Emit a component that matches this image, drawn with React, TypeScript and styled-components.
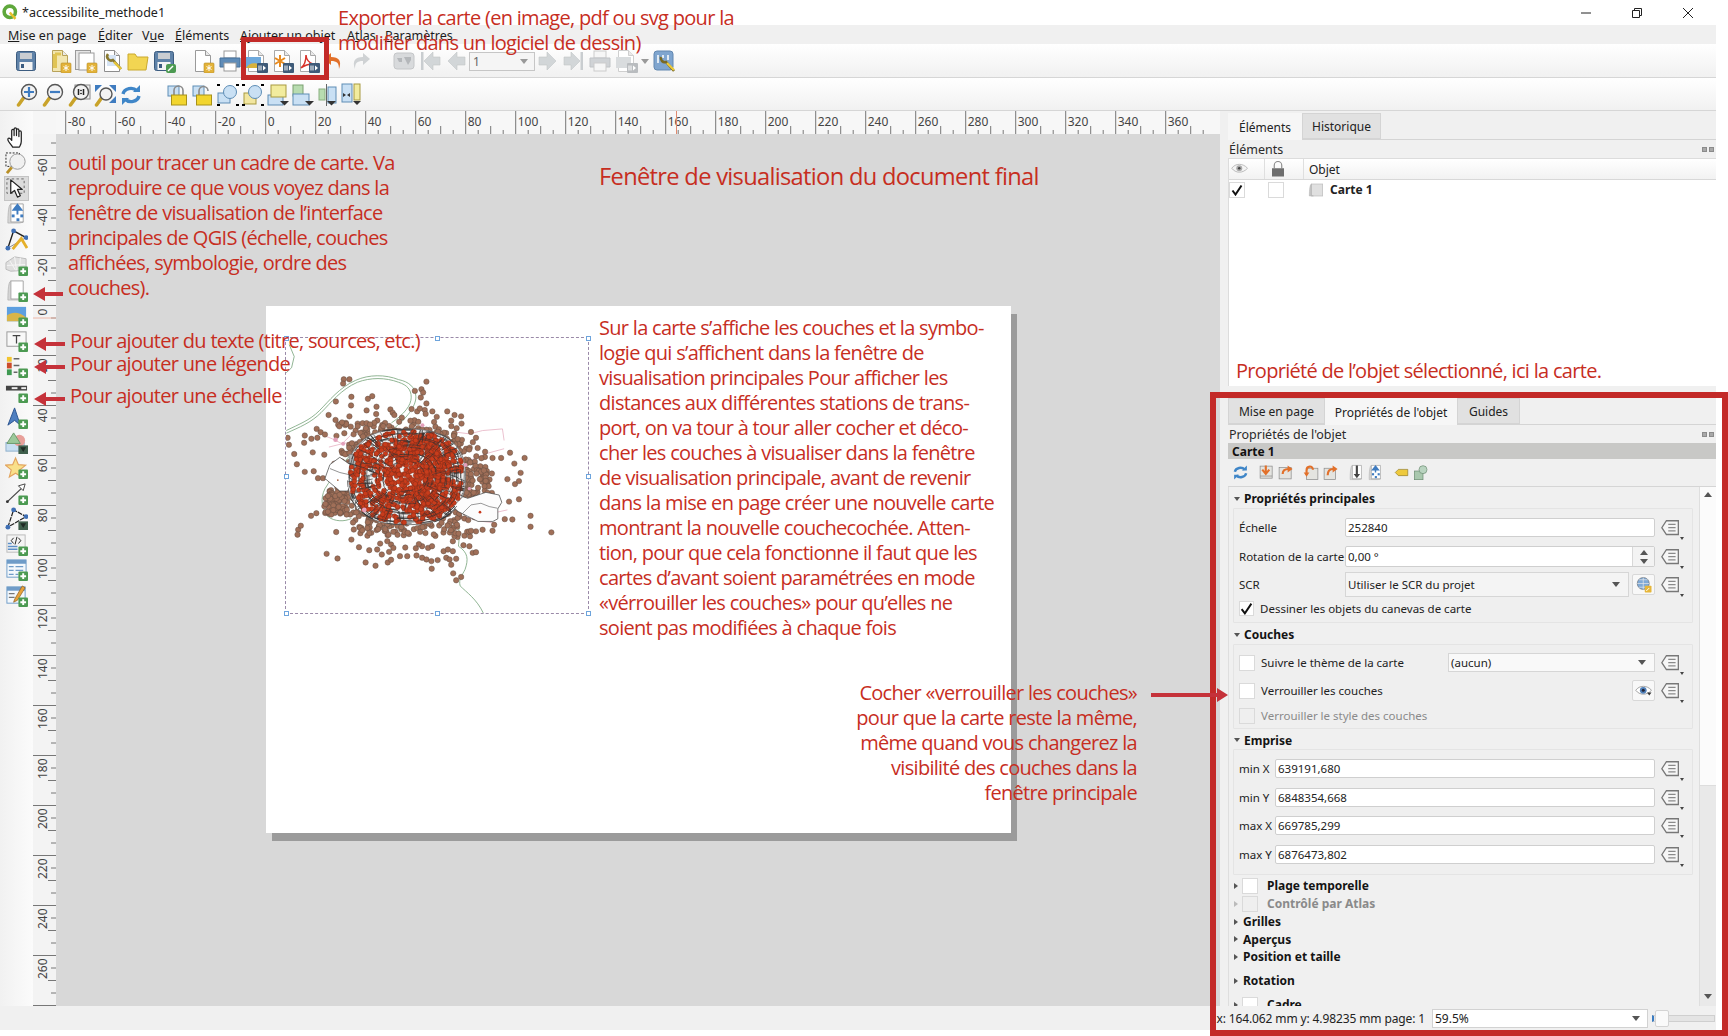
import React, { useMemo } from "react";
import styled, { createGlobalStyle } from "styled-components";

const GlobalStyle = createGlobalStyle`
  html, body { margin: 0; padding: 0; background: #fff; overflow: hidden; }
  body { width: 1728px; height: 1036px; font-family: "Noto Sans", "Open Sans", sans-serif; color: #1a1a1a; }
  * { box-sizing: border-box; }
`;

const UI = `"Noto Sans", "Open Sans", sans-serif`;
const RED = "#c72e1f";
const FRAME = "#c32a28";

const Page = styled.div`position: relative; width: 1728px; height: 1036px; overflow: hidden; background: #fff;`;
const Win = styled.div`width: 1716px; height: 1005px; display: flex; flex-direction: column;`;

const TitleBar = styled.div`height: 25px; width: 1728px; background: #fff; display: flex; align-items: center; padding-left: 2px; font: 12.5px ${UI}; color: #222;`;
const TitleText = styled.span`margin-left: 3px;`;
const WinButtons = styled.div`margin-left: auto; display: flex; gap: 27px; padding-right: 28px; align-items: center;`;

const MenuBar = styled.div`height: 19px; flex: 0 0 19px; background: #f0f0f0; display: flex; align-items: center; padding-top: 2px; font: 12.5px ${UI}; color: #1c1c1c;`;
const MenuItem = styled.span<{ $w: number }>`flex: 0 0 auto; width: ${(p) => p.$w}px; u { text-decoration-thickness: 1px; }`;
const MenuPad = styled.span`width: 8px;`;

const Toolbar = styled.div<{ $h: number; $pad: number }>`
  height: ${(p) => p.$h}px; flex: 0 0 ${(p) => p.$h}px; padding: 1px 0 0 ${(p) => p.$pad}px; display: flex; align-items: center;
  background: linear-gradient(#ffffff, #f1f1f1); border-bottom: 1px solid #d6d6d6;
`;
const ToolBtn = styled.span<{ $w?: number }>`flex: 0 0 auto; width: ${(p) => p.$w ?? 26}px; display: flex; justify-content: center; align-items: center;`;
const ToolGap = styled.span<{ $w: number }>`flex: 0 0 auto; width: ${(p) => p.$w}px;`;
const PageCombo = styled.span`
  flex: 0 0 auto; width: 66px; height: 19px; border: 1px solid #c6c6c6; background: #f5f5f5; font: 12px ${UI}; color: #666;
  display: flex; align-items: center; justify-content: space-between; padding: 0 6px 0 3px;
`;
const Caret = styled.span<{ $c?: string }>`width: 0; height: 0; border-left: 4.5px solid transparent; border-right: 4.5px solid transparent; border-top: 5px solid ${(p) => p.$c ?? "#555"};`;

const Main = styled.div`flex: 1; display: flex; min-height: 0;`;
const LeftBar = styled.div`width: 33px; flex: 0 0 33px; background: linear-gradient(90deg, #f1f1f1, #fbfbfb); padding-top: 14px; display: flex; flex-direction: column; align-items: center;`;
const LeftBtn = styled.span<{ $on?: boolean }>`
  flex: 0 0 25.42px; width: 25px; display: flex; align-items: center; justify-content: center;
  ${(p) => p.$on && "background:#dcdcdc;border:1px solid #c4c4c4;"}
`;

const Center = styled.div`width: 1187px; display: grid; grid-template-columns: 23px 1fr; grid-template-rows: 23px 1fr;`;
const Corner = styled.div`background: #f6f6f6;`;
const RulerH = styled.svg`display: block; width: 1164px; height: 23px; background: #f7f7f7;`;
const RulerV = styled.svg`display: block; width: 23px; height: 872px; background: #f3f3f3;`;
const Canvas = styled.div`position: relative; background: #d8d8d8; overflow: hidden;`;
const Paper = styled.div`position: absolute; left: 210px; top: 172px; width: 745px; height: 527px; background: #fff; box-shadow: 6px 8px 0 #9b9b9b;`;
const MapFrame = styled.div`position: absolute; left: 19px; top: 31px; width: 304px; height: 277px; border: 1px dashed #9a8aa8;`;
const Handle = styled.i<{ $x: number; $y: number }>`
  position: absolute; left: ${(p) => p.$x}%; top: ${(p) => p.$y}%; width: 5px; height: 5px; margin: -2px 0 0 -2px;
  background: #fff; border: 1px solid #6ea4dc;
`;
const MapSvg = styled.svg`position: absolute; inset: 0; width: 302px; height: 275px;`;

const Right = styled.div`width: 496px; min-height: 0; overflow: hidden; padding-left: 8px; background: #f0f0f0; display: flex; flex-direction: column; font: 11.5px ${UI}; color: #222;`;
const Tabs = styled.div<{ $mt?: number }>`height: 27px; flex: 0 0 27px; margin-top: ${(p) => p.$mt ?? 0}px; display: flex; border-bottom: 1px solid #d4d4d4;`;
const Tab = styled.span<{ $w: number; $on?: boolean }>`
  width: ${(p) => p.$w}px; height: ${(p) => (p.$on ? 27 : 26)}px; display: flex; align-items: center; justify-content: center; font: 12px ${UI}; padding-top: 1px;
  background: ${(p) => (p.$on ? "#f6f6f6" : "#e1e1e1")}; border: 1px solid #d4d4d4; border-bottom: ${(p) => (p.$on ? "0" : "1px solid #d4d4d4")};
  ${(p) => p.$on && "border-top:0;border-left:0;border-right:0;"}
`;
const DockHead = styled.div`height: 18px; flex: 0 0 18px; display: flex; align-items: center; justify-content: space-between; font: 12.5px ${UI}; padding: 1px 2px 0 1px; color: #2a2a2a;`;
const DockBtns = styled.span`display: flex; gap: 2px;`;
const DockBtn = styled.i`width: 5px; height: 5px; background: #a8a8a8; border: 1px solid #8b8b8b;`;

const Tree = styled.div`height: 228px; flex: 0 0 228px; background: #fff; border-left: 1px solid #dcdcdc; border-top: 1px solid #dcdcdc;`;
const TreeHead = styled.div`height: 21px; display: flex; background: linear-gradient(#fff, #f2f2f2); border-bottom: 1px solid #d8d8d8;`;
const TreeIconCell = styled.div<{ $w: number; $pad: number }>`
  width: ${(p) => p.$w}px; display: flex; align-items: center; padding-left: ${(p) => p.$pad}px; border-right: 1px solid #dfdfdf;
`;
const TreeTextCell = styled.div`flex: 1; display: flex; align-items: center; padding-left: 5px; font: 12px ${UI};`;
const TreeRow = styled.div`height: 19px; display: flex; align-items: center;`;
const TreeName = styled.b`margin-left: 6px; font: bold 12px ${UI};`;
const CheckBox = styled.span<{ $dim?: boolean; $s?: number }>`
  flex: 0 0 auto; width: ${(p) => p.$s ?? 16}px; height: ${(p) => p.$s ?? 16}px; background: ${(p) => (p.$dim ? "#efefef" : "#fff")}; border: 1px solid #dadada;
  display: inline-flex; align-items: center; justify-content: center;
`;
const TreeCheck = styled.span<{ $w: number; $pad: number }>`flex: 0 0 ${(p) => p.$w}px; padding-left: ${(p) => p.$pad}px; display: flex;`;

const Spacer6 = styled.div`height: 6px; flex: 0 0 6px;`;
const Title1 = styled.div`height: 16px; flex: 0 0 16px; background: #c8c8c6; font: bold 12px ${UI}; padding-left: 4px; display: flex; align-items: center; color: #111;`;
const IconRow = styled.div`height: 28px; flex: 0 0 28px; display: flex; align-items: center; padding-left: 3px; border-bottom: 1px solid #d5d5d5;`;
const SmallBtn = styled.span`flex: 0 0 19.5px; display: flex; justify-content: center;`;
const SmallSep = styled.span<{ $w: number }>`flex: 0 0 ${(p) => p.$w}px;`;

const Scroll = styled.div`flex: 1; min-height: 0; display: flex; overflow: hidden;`;
const Form = styled.div`width: 471px; padding-left: 4px; display: flex; flex-direction: column; border-left: 1px solid #dedede;`;
const Section = styled.div<{ $h: number; $mt?: number; $dim?: boolean }>`
  height: ${(p) => p.$h}px; flex: 0 0 ${(p) => p.$h}px; margin-top: ${(p) => p.$mt ?? 0}px; display: flex; align-items: center;
  font: bold 12px ${UI}; color: ${(p) => (p.$dim ? "#8a8a8a" : "#141414")};
`;
const HeadSection = styled(Section)`padding-top: 2px;`;
const Tri = styled.span<{ $open?: boolean; $dim?: boolean }>`
  flex: 0 0 auto; width: 0; height: 0; margin: 0 4px 0 1px;
  ${(p) => p.$open
    ? `border-left:3px solid transparent;border-right:3px solid transparent;border-top:4px solid #555;`
    : `border-top:3px solid transparent;border-bottom:3px solid transparent;border-left:4px solid ${p.$dim ? "#bbb" : "#555"};margin-right:5px;`}
`;
const SectionCheck = styled.span`margin-right: 9px; margin-left: -1px; display: flex;`;
const Group = styled.div<{ $pt: number; $pb: number; $gap: number }>`
  flex: 0 0 auto; border: 1px solid #e4e4e4; background: #efefef; margin-right: 6px; padding: ${(p) => p.$pt}px 5px ${(p) => p.$pb}px 5px;
  display: flex; flex-direction: column; gap: ${(p) => p.$gap}px; border-radius: 1px;
`;
const Row = styled.div<{ $h?: number; $mt?: number }>`height: ${(p) => p.$h ?? 19}px; margin-top: ${(p) => p.$mt ?? 0}px; display: flex; align-items: center;`;
const Label = styled.span<{ $w: number; $dim?: boolean }>`flex: 0 0 ${(p) => p.$w}px; white-space: nowrap; color: ${(p) => (p.$dim ? "#8a8a8a" : "#222")};`;
const CheckLabel = styled.span<{ $dim?: boolean }>`margin-left: 6px; white-space: nowrap; color: ${(p) => (p.$dim ? "#8a8a8a" : "#222")};`;
const Field = styled.span`flex: 1; height: 100%; background: #fff; border: 1px solid #cfcfcf; border-radius: 2px; padding-left: 2px; display: flex; align-items: center; color: #222;`;
const Combo = styled.span<{ $w?: number }>`
  ${(p) => (p.$w ? `flex:0 0 ${p.$w}px;` : "flex:1;")} height: 100%; background: #f4f4f4; border: 1px solid #d6d6d6; padding: 0 8px 0 2px;
  display: flex; align-items: center; justify-content: space-between;
`;
const WhiteCombo = styled(Combo)`background: #f9f9f9;`;
const SpinBox = styled.span`margin-left: auto; width: 22px; height: 100%; border-left: 1px solid #d8d8d8; background: #f3f3f3; display: flex; flex-direction: column; align-items: center; justify-content: center; gap: 4px;`;
const CaretUp = styled(Caret)`border-top: 0; border-bottom: 5px solid #555;`;
const DD = styled.span`flex: 0 0 27px; margin-left: 5px; height: 19px; display: flex; position: relative;`;
const DDCaret = styled.i`position: absolute; right: 3px; bottom: -3px; width: 0; height: 0; border-left: 2.5px solid transparent; border-right: 2.5px solid transparent; border-top: 3px solid #444;`;
const SquareBtn = styled.span`flex: 0 0 23px; margin-left: 3px; height: 21px; background: #f8f8f8; border: 1px solid #d8d8d8; border-radius: 2px; display: flex; align-items: center; justify-content: center;`;
const PushRight = styled.span`margin-left: auto;`;

const VScroll = styled.div`width: 17px; flex: 0 0 17px; display: flex; flex-direction: column; border-left: 1px solid #dedede;`;
const VThumb = styled.div`height: 299px; flex: 0 0 299px; background: #fbfbfb; border-bottom: 1px solid #ddd; padding-top: 5px; display: flex; justify-content: center;`;
const VTrack = styled.div`flex: 1; background: #e9e9e9; display: flex; justify-content: center; align-items: flex-start; padding-top: 208px;`;

const Status = styled.div`height: 24px; flex: 0 0 24px; background: #f0f0f0; display: flex; align-items: center; justify-content: flex-end; font: 12px ${UI}; color: #222; padding-right: 1px;`;
const StatusText = styled.span`margin-right: 7px; white-space: nowrap; letter-spacing: -0.12px;`;
const ZoomCombo = styled.span`width: 216px; height: 19px; background: #fff; border: 1px solid #d2d2d2; padding: 0 7px 0 2px; display: flex; align-items: center; justify-content: space-between;`;
const Slider = styled.span`position: relative; width: 63px; height: 7px; margin-left: 4px; background: #e4e4e4; border: 1px solid #cfcfcf; border-left: 2px solid #3a7cc2;`;
const SliderKnob = styled.i`position: absolute; left: 1px; top: -6px; width: 14px; height: 17px; background: #fafafa; border: 1px solid #d4d4d4; border-radius: 2px;`;

const Annot = styled.div<{ $x: number; $y: number; $size?: number; $lh?: number; $right?: boolean }>`
  position: absolute; ${(p) => (p.$right ? `right:${1728 - p.$x}px;text-align:right;` : `left:${p.$x}px;`)} top: ${(p) => p.$y}px;
  font-family: "Open Sans", sans-serif; font-size: ${(p) => p.$size ?? 20}px; line-height: ${(p) => p.$lh ?? 25}px; letter-spacing: -0.7px; color: ${RED}; white-space: nowrap;
`;
const AnnotLine = styled.div``;
const RedRect = styled.div`position: absolute; left: 241px; top: 37px; width: 88px; height: 43px; border: 5px solid ${FRAME}; pointer-events: none;`;
const RedPanel = styled.div`position: absolute; left: 1210px; top: 392px; width: 518px; height: 644px; border: 6px solid ${FRAME}; pointer-events: none;`;
const ArrowBox = styled.svg<{ $x: number; $y: number; $w: number }>`position: absolute; left: ${(p) => p.$x}px; top: ${(p) => p.$y}px; width: ${(p) => p.$w}px; height: 14px;`;
const IconSvg = styled.svg`display: block; flex: 0 0 auto;`;

/* ---------- icons ---------- */
const PlusB = () => (<g><rect x="14" y="14" width="10" height="10" rx="1" fill="#4c9a52" /><path d="M19 16v6M16 19h6" stroke="#fff" strokeWidth="2" /></g>);
const DarkB = () => (<g><rect x="14" y="15" width="10" height="9" fill="#3f5f4c" /><path d="M16 17h6l-3 5z" fill="#1f2a24" /></g>);
const StarB = () => (<g><rect x="13" y="14" width="10" height="10" rx="1" fill="#e3b33a" stroke="#b98f25" strokeWidth=".6" /><path d="M18 16v6M15.500 17.500l5 3M20.500 17.500l-5 3" stroke="#fff" strokeWidth="1" /></g>);
const ExpB = ({ c = "#3e5a78" }: { c?: string }) => (<g><rect x="13" y="14" width="11" height="10" rx="1" fill={c} /><path d="M15 16.500v5M17 16.500v5" stroke="#fff" strokeWidth="1" /><path d="M19 16.500l3 2.500-3 2.500" fill="#fff" /></g>);
const Doc = ({ f = "#fff", s = "#9a9a9a" }: { f?: string; s?: string }) => (<g><path d="M4.500 1.500h10l5 5v16h-15z" fill={f} stroke={s} /><path d="M14.500 1.500v5h5" fill="#e9e9e9" stroke={s} /></g>);
const Lens = ({ cx = 14, cy = 9, r = 7.500, fill = "#f2f2f2" }: { cx?: number; cy?: number; r?: number; fill?: string }) => (
  <g><path d="M8.500 15L3.500 22" stroke="#c9a32a" strokeWidth="3.500" strokeLinecap="round" /><circle cx={cx} cy={cy} r={r} fill={fill} stroke="#555" strokeWidth="1.400" /></g>
);
const Floppy = () => (<g><rect x="2.500" y="2.500" width="19" height="19" rx="2" fill="#5f82a8" stroke="#3c5c80" /><rect x="6" y="4" width="12" height="6" fill="#c9cdd2" /><rect x="5.500" y="13" width="13" height="8" fill="#f4f4f4" /><rect x="7" y="15" width="3" height="4" fill="#3c5c80" /></g>);
const Refresh = () => (<g fill="none" stroke="#3f86c8" strokeWidth="3.400"><path d="M4 11a8 7 0 0 1 14-3" /><path d="M20 13a8 7 0 0 1-14 3" /><path d="M14 9l7 0 0-7z" fill="#3f86c8" strokeWidth="0" /><path d="M10 15l-7 0 0 7z" fill="#3f86c8" strokeWidth="0" /></g>);
const Lock = ({ open }: { open?: boolean }) => (<g><rect x="2" y="3" width="11" height="10" fill="#c9e0f4" stroke="#5e8db5" /><path d={open ? "M8 13V8a4.500 4.500 0 0 1 9 0" : "M8 13V7.500a4.500 4.500 0 0 1 9 0V13"} fill="none" stroke="#8a8a8a" strokeWidth="1.600" /><rect x="5.500" y="12" width="15" height="10" fill="#f2d52e" stroke="#a8921a" /></g>);
const GreyArrow = ({ d }: { d: string }) => <path d={d} fill="#d2d6d8" stroke="#c2c6c8" strokeWidth=".6" />;
const Curl = () => (<g><path d="M6 2h13v19H6z" fill="#fff" stroke="#a4a4a4" /><path d="M6 2C3 3 3 18 3 22h12l4-1H6z" fill="#d6d6d6" stroke="#a4a4a4" strokeWidth=".6" /></g>);

const glyphs: Record<string, React.ReactNode> = {
  save: <Floppy />,
  newL: <g><Doc f="#f2e6b0" s="#b8a25a" /><path d="M7 5v14" stroke="#e0c454" strokeWidth="4" /><path d="M7 5h6" stroke="#e0c454" strokeWidth="3" /><StarB /></g>,
  dupL: <g><rect x="1.500" y="1.500" width="15" height="19" fill="#e6e6e6" stroke="#9a9a9a" /><rect x="5" y="4" width="15" height="17" fill="#fff" stroke="#9a9a9a" /><StarB /></g>,
  mgr: <g><Doc s="#8d8d8d" /><rect x="7" y="6" width="9" height="11" fill="#d6e4f4" /><path d="M8 5a4 4 0 0 0 5 6l8 9" stroke="#8a7a30" strokeWidth="2.600" fill="none" /><path d="M14 13l7 7" stroke="#e5c53a" strokeWidth="2.400" /></g>,
  folder: <path d="M2 5h7l2 3h11l-2 13H2z" fill="#f2d552" stroke="#caa92e" />,
  saveT: <g><Floppy /><rect x="14" y="15" width="10" height="9" rx="2" fill="#4c9a52" /><path d="M16 22l5-5" stroke="#fff" strokeWidth="1.500" /></g>,
  newP: <g><Doc /><StarB /></g>,
  print: <g><rect x="6" y="2" width="12" height="7" fill="#fff" stroke="#999" /><path d="M2 9h20v9H2z" fill="#5f8cb8" stroke="#46709a" /><rect x="6" y="14" width="12" height="8" fill="#fff" stroke="#999" /></g>,
  expImg: <g><Doc s="#a8a8a8" /><rect x="2" y="8" width="15" height="11" fill="#6ea9dc" /><path d="M2 19c3-5 8-6 15-3v3z" fill="#d8b23c" /><ExpB /></g>,
  expSvg: <g><Doc s="#a8a8a8" /><g stroke="#e88a1e" strokeWidth="2"><path d="M10 6v12M5 9l10 6M15 9L5 15" /></g><ExpB /></g>,
  expPdf: <g><Doc s="#a8a8a8" /><path d="M5 19c4-3 5-9 5-13 0 4 3 8 7 9-4 0-8 1-12 4z" fill="none" stroke="#d7322a" strokeWidth="1.500" /><ExpB /></g>,
  undo: <path d="M9 4L2 10l7 6v-4c6 0 8 2 8 8 3-8 0-12-8-12z" fill="#e2702a" />,
  redo: <path d="M15 4l7 6-7 6v-4c-6 0-8 2-8 8-3-8 0-12 8-12z" fill="#cfd2d4" />,
  atlas: <g><rect x="2" y="4" width="20" height="16" rx="3" fill="#d8dadc" stroke="#c4c6c8" /><path d="M5 9h5v4H7zM12 8h7v3l-3 5-2-4z" fill="#b4b7ba" /></g>,
  first: <g><rect x="3" y="3" width="2.500" height="18" fill="#c9cdd0" /><GreyArrow d="M6 12l9-9v5h7v8h-7v5z" /></g>,
  prev: <GreyArrow d="M4 12l9-9v5h8v8h-8v5z" />,
  next: <GreyArrow d="M20 12l-9-9v5H3v8h8v5z" />,
  last: <g><rect x="18.500" y="3" width="2.500" height="18" fill="#c9cdd0" /><GreyArrow d="M18 12L9 3v5H2v8h7v5z" /></g>,
  printD: <g><rect x="6" y="2" width="12" height="7" fill="#f6f6f6" stroke="#ccc" /><path d="M2 9h20v9H2z" fill="#d0d3d6" stroke="#c0c3c6" /><rect x="6" y="14" width="12" height="8" fill="#f6f6f6" stroke="#ccc" /></g>,
  expD: <g><Doc s="#cfcfcf" /><rect x="2" y="8" width="15" height="11" fill="#d9dcde" /><ExpB c="#b9bcbf" /></g>,
  settings: <g><rect x="2" y="2" width="19" height="19" rx="3" fill="#7fa5cf" stroke="#6287b0" /><path d="M6 6v8M11 6v3M16 6v5" stroke="#fff" strokeWidth="1.500" /><path d="M9 8a4 4 0 0 0 5 5l8 9" stroke="#7a6a24" strokeWidth="2.600" fill="none" /><path d="M15 14l7 7" stroke="#edcb3a" strokeWidth="2.200" /></g>,
  zIn: <g><Lens /><path d="M14 4v10M9 9h10" stroke="#3f7cc0" strokeWidth="2.200" /></g>,
  zOut: <g><Lens /><path d="M9 9h10" stroke="#3f7cc0" strokeWidth="2.200" /></g>,
  z11: <g><rect x="8" y="2" width="15" height="14" fill="#eee" stroke="#888" /><Lens /><path d="M11.500 6v6M16.500 6v6" stroke="#222" strokeWidth="1.500" /><circle cx="14" cy="7.500" r=".8" /><circle cx="14" cy="10.500" r=".8" /></g>,
  zFull: <g><path d="M2 2h7L2 9zM23 2h-7l7 7zM23 20h-7l7-7z" fill="#3f7cc0" /><Lens cx={13} cy={11} r={6} /></g>,
  refresh: <Refresh />,
  lock: <Lock />,
  unlock: <Lock open />,
  group: <g><rect x="2" y="10" width="12" height="10" fill="#c9e0f4" stroke="#5e8db5" /><circle cx="14" cy="9" r="6.500" fill="#c9e0f4" stroke="#5e8db5" /><path d="M1 2h3M20 2h3M1 22h3M20 22h3" stroke="#000" strokeWidth="2" /></g>,
  ungroup: <g><rect x="3" y="10" width="12" height="11" fill="#f2e6a0" stroke="#a89a40" /><circle cx="14" cy="9" r="6.500" fill="#c9e0f4" stroke="#5e8db5" /><path d="M1 2h3M20 2h3M1 22h3M20 22h3" stroke="#000" strokeWidth="2" /></g>,
  raise: <g><rect x="2" y="12" width="15" height="10" fill="#c9e0f4" stroke="#5e8db5" /><rect x="5" y="2" width="15" height="12" fill="#f2ec9e" stroke="#a89a40" /><path d="M14 18h9l-4.500 4.500z" fill="#333" /></g>,
  lower: <g><rect x="2" y="2" width="10" height="11" fill="#b8dcb0" stroke="#7aa070" /><rect x="2" y="11" width="16" height="11" fill="#c9e0f4" stroke="#5e8db5" /><path d="M14 18h9l-4.500 4.500z" fill="#333" /></g>,
  align: <g><rect x="3" y="6" width="6" height="11" fill="#b8dcb0" stroke="#8ab080" /><rect x="12" y="4" width="8" height="16" fill="#c9e0f4" stroke="#5e8db5" /><path d="M10.500 1v22" stroke="#666" /><path d="M11 18h9l-4.500 4.500z" fill="#333" /></g>,
  distrib: <g><rect x="1" y="1" width="10" height="18" fill="#c9e0f4" stroke="#5e8db5" /><rect x="13" y="1" width="6" height="16" fill="#f2ec9e" stroke="#a89a40" /><path d="M2 10l3 2-3 2zM9 10l-3 2 3 2z" fill="#333" /><path d="M12 18h8l-4 4z" fill="#333" /></g>,
  hand: <path d="M8 22c-2-3-5-6-5-8 0-2 2-2 4 1V5c0-2 2.500-2 2.500 0v5V3.500c0-2 2.500-2 2.500 0V10V4.500c0-2 2.500-2 2.500 0V11V6.500c0-2 2.500-2 2.500 0V16c0 3-1 4-2 6z" fill="#fff" stroke="#222" strokeWidth="1.300" strokeLinejoin="round" />,
  zoomTool: <g><rect x="1" y="1" width="14" height="14" fill="none" stroke="#222" strokeDasharray="2 1.500" /><path d="M7 16l-5 6" stroke="#b98f25" strokeWidth="3" /><circle cx="13" cy="10" r="8" fill="#f0f0f0" stroke="#999" /></g>,
  select: <g><rect x="2" y="2" width="18" height="15" fill="none" stroke="#666" strokeDasharray="2.500 2.500" /><path d="M6 3v14l4-3 3 7 3-1.500-3-6.500h5z" fill="#fff" stroke="#222" strokeWidth="1.300" strokeLinejoin="round" /></g>,
  moveC: <g><Curl /><path d="M13 3l-4 5h8z M13 8v5" fill="#3f7cc0" stroke="#3f7cc0" strokeWidth="2" /><g fill="#3f7cc0"><rect x="7" y="13" width="3" height="3" /><rect x="16" y="13" width="3" height="3" /><rect x="12" y="17" width="3" height="3" /></g></g>,
  editN: <g><path d="M3 21L9 3l13 7" fill="none" stroke="#222" strokeWidth="1.500" /><path d="M3 21l19-11" stroke="#888" strokeWidth="1" /><g fill="#3f6fb4"><circle cx="9" cy="3" r="2.500" /><circle cx="3" cy="21" r="2.500" /><circle cx="22" cy="10" r="2.500" /></g><path d="M8 22l9-11 6 10" fill="none" stroke="#e5b02a" strokeWidth="3" /></g>,
  add3d: <g><path d="M1 10l9-6 12 2v12l-16 1-5-2z" fill="#dfdfdf" stroke="#bcbcbc" /><path d="M5 8l6 10M10 4l2 14M16 5l-1 13M2 13l19-1" stroke="#f6f6f6" /><PlusB /></g>,
  addMap: <g><Curl /><PlusB /></g>,
  addPic: <g><rect x="2" y="3" width="20" height="15" fill="#5d9fe0" /><path d="M2 18V12c6-4 12-4 20 2v4z" fill="#d8b54a" /><PlusB /></g>,
  addLbl: <g><rect x="2" y="3" width="20" height="15" fill="#f8f8f8" stroke="#999" /><path d="M8 7h8M12 7v8" stroke="#444" strokeWidth="1.300" /><PlusB /></g>,
  addLeg: <g><rect x="2" y="2" width="5" height="5" fill="#f2c530" /><rect x="2" y="8" width="5" height="6" fill="#cc4b2a" /><rect x="2" y="15" width="5" height="6" fill="#3f9a52" /><path d="M9 4h6M9 11h6M9 18h4" stroke="#666" strokeWidth="1.500" /><PlusB /></g>,
  addScale: <g><rect x="1" y="6" width="22" height="5" fill="#444" /><rect x="7" y="7.500" width="6" height="2" fill="#eee" /><rect x="17" y="7.500" width="5" height="2" fill="#eee" /><PlusB /></g>,
  addN: <g><path d="M3 20L10 2l6 18-6-5z" fill="#4f7fc0" stroke="#2c5590" /><PlusB /></g>,
  addShape: <g><rect x="1" y="12" width="19" height="9" fill="#c8dff2" stroke="#8fb0cc" /><circle cx="15" cy="10" r="6" fill="#e8a09a" /><path d="M9 2l7 11H2z" fill="#9cc89a" stroke="#6c9a6c" /><DarkB /></g>,
  addStar: <g><path d="M11 2l3 7 7.500.500-6 5 2 7.500-6.500-4-6.500 4 2-7.500-6-5L8 9z" fill="#f9e08a" stroke="#e2a35e" strokeWidth="1.200" /><PlusB /></g>,
  addArrow: <g><path d="M2 21L20 4" stroke="#444" strokeWidth="1.300" /><circle cx="2.500" cy="20.500" r="1.500" fill="#333" /><path d="M21 2l-7 2 5 5z" fill="#fff" stroke="#444" /><PlusB /></g>,
  addNodes: <g><path d="M3 21L9 3l13 7z" fill="none" stroke="#222" strokeDasharray="5 1" strokeWidth="1.300" /><g fill="#3f6fb4"><circle cx="9" cy="3" r="2.500" /><circle cx="3" cy="21" r="2.500" /><circle cx="22" cy="10" r="2.500" /></g><DarkB /></g>,
  addHtml: <g><rect x="2" y="2" width="19" height="18" fill="#f4f4f4" stroke="#bbb" /><path d="M9 5L6.500 8 9 11M14 5l2.500 3L14 11M12.500 4l-2 8" stroke="#222" fill="none" /><path d="M3 11h4M3 14h10M3 17h10" stroke="#5c8fc8" strokeWidth="1.600" /><PlusB /></g>,
  addTable: <g><rect x="2" y="2" width="20" height="18" fill="#f4f8fc" stroke="#6f9cc8" /><rect x="2" y="2" width="20" height="4" fill="#6f9cc8" /><path d="M4 9h5M11 9h8M4 13h5M11 13h8M4 17h5M11 17h3" stroke="#6f9cc8" strokeWidth="1.300" /><PlusB /></g>,
  addFixed: <g><rect x="2" y="3" width="19" height="17" fill="#f4f8fc" stroke="#6f9cc8" /><rect x="2" y="3" width="19" height="4" fill="#6f9cc8" /><path d="M4 10h6M4 14h6" stroke="#777" strokeWidth="1.300" /><path d="M10 16L18 2l3 2-8 13-4 2z" fill="#e8a23a" stroke="#8a5a1c" strokeWidth=".7" /><PlusB /></g>,
  dd: <g fill="none" stroke="#777" strokeWidth="1.400"><path d="M7 3h13v15H7L2 10.500z" fill="#f6f6f6" /><path d="M9 7h8M9 10.500h8M9 14h8" stroke="#8a8a8a" /></g>,
  globe: <g><circle cx="11" cy="10" r="8" fill="#7fa9d6" stroke="#555" strokeWidth=".7" /><path d="M3 10h16M11 2v16M5 5h12M5 15h12" stroke="#e8e8e8" strokeWidth=".9" /><rect x="13" y="13" width="9" height="9" rx="1" fill="#e6b63a" /><path d="M15 20l4-4" stroke="#fff" strokeWidth="1.300" /></g>,
  eye: <g><path d="M1 11c5-7 15-7 21 0-6 7-16 7-21 0z" fill="#fff" stroke="#888" /><circle cx="11" cy="11" r="4.500" fill="#4f7fb8" /><circle cx="11" cy="11" r="2" fill="#223" /><path d="M16 14h6l-3 4z" fill="#333" /></g>,
  eyeG: <g><path d="M1 11c5-7 15-7 21 0-6 7-16 7-21 0z" fill="#f4f4f4" stroke="#aaa" /><circle cx="11" cy="11" r="4" fill="#aaa" /><circle cx="11" cy="11" r="1.700" fill="#444" /></g>,
  padlock: <g><path d="M7 11V7a5 5 0 0 1 10 0v4" fill="none" stroke="#8a8a8a" strokeWidth="1.500" /><rect x="4" y="11" width="16" height="11" fill="#6e6e6e" /></g>,
  map1: <g><rect x="5" y="3" width="17" height="18" fill="#e0e0e0" stroke="#bbb" /><path d="M5 3C2 4 2 18 2 21h6l-3-1z" fill="#c6c6c6" stroke="#aaa" strokeWidth=".6" /></g>,
  p1: <g><rect x="3" y="3" width="17" height="17" fill="#e4e4e0" stroke="#8a8a8a" /><path d="M11 2v10M6 8l5 6 5-6" stroke="#e2702a" strokeWidth="3" fill="none" /><path d="M3 17h17" stroke="#8a8a8a" /></g>,
  p2: <g><rect x="3" y="5" width="17" height="16" fill="#e4e4e0" stroke="#8a8a8a" /><path d="M8 14c0-5 3-7 8-7" stroke="#e2702a" strokeWidth="3" fill="none" /><path d="M15 2l7 5-7 5z" fill="#e2702a" /></g>,
  p3: <g><rect x="5" y="6" width="16" height="16" fill="#e4e4e0" stroke="#8a8a8a" /><path d="M14 8c0-6-9-6-9 1v6" stroke="#e2702a" strokeWidth="3" fill="none" /><path d="M1 12l4 6 4-6z" fill="#e2702a" /></g>,
  p4: <g><rect x="3" y="6" width="16" height="16" fill="#e4e4e0" stroke="#8a8a8a" /><path d="M8 16c0-6 3-9 8-9" stroke="#e2702a" strokeWidth="3" fill="none" /><path d="M15 2l7 5-7 5z" fill="#e2702a" /></g>,
  p5: <g><Curl /><path d="M8 14h9l-4.500 6zM11 2h3v12h-3z" fill="#444" /></g>,
  p6: <g><Curl /><path d="M12 3l-4 5h8zM12 8v4" fill="#3f7cc0" stroke="#3f7cc0" strokeWidth="2" /><g fill="#3f7cc0"><rect x="7" y="13" width="3" height="3" /><rect x="15" y="13" width="3" height="3" /><rect x="11" y="17" width="3" height="3" /></g></g>,
  p7: <path d="M2 12l5-5h15v10H7z" fill="#eec93c" stroke="#8a7420" />,
  p8: <g><rect x="2" y="9" width="13" height="13" fill="#a9c8ae" stroke="#6a8a70" /><circle cx="15" cy="7" r="6" fill="#b9d4c0" stroke="#6a8a70" /></g>,
};

const Icon = ({ n, s = 24 }: { n: string; s?: number }) => <IconSvg width={s} height={s} viewBox="0 0 24 24">{glyphs[n]}</IconSvg>;

const Logo = () => (
  <IconSvg width="17" height="17" viewBox="0 0 24 24">
    <circle cx="11" cy="11" r="8" fill="none" stroke="#5fa83c" strokeWidth="5" />
    <path d="M11 12l8 9" stroke="#e6c02a" strokeWidth="3.500" />
  </IconSvg>
);

const DataBtn = () => (<DD><Icon n="dd" s={22} /><DDCaret /></DD>);

/* ---------- map drawing ---------- */
const outliers: [number, number][] = [[250,235],[267,235],[248,248],[500,242],[465,270],[485,265],[490,275],[483,290],[273,288],[226,302],[272,314],[323,294],[336,286],[500,308],[319,329],[349,318],[391,326],[348,340],[204,343],[267,347],[455,325],[472,332],[495,328],[518,332],[563,332],[585,343],[605,347],[575,360],[225,358],[240,370],[168,385],[180,395],[193,402],[132,405],[152,415],[170,412],[130,427],[80,412],[84,433],[100,461],[156,456],[191,463],[108,492],[132,515],[159,513],[172,534],[187,534],[655,443],[650,412],[797,473],[753,457],[766,490],[726,473],[700,473],[677,470],[785,518],[698,520],[745,537],[768,552],[780,543],[780,598],[750,605],[815,648],[815,681],[878,698],[760,659],[737,658],[705,675],[700,693],[670,690],[650,695],[112,690],[120,678],[110,705],[151,648],[167,640],[227,697],[273,720],[296,743],[327,752],[351,750],[360,732],[393,735],[400,745],[387,757],[365,765],[198,763],[231,777],[316,789],[346,799],[383,789],[393,781],[420,770],[442,770],[436,744],[468,746],[470,768],[487,740],[505,745],[517,740],[487,775],[500,780],[515,785],[534,782],[552,755],[565,750],[580,755],[560,775],[570,780],[590,778],[575,796],[516,808],[581,822],[605,833],[590,843],[640,760],[650,758],[630,740],[612,737],[632,710],[615,708],[594,712],[580,725]];

const rng = (seed: number) => () => { seed = (seed * 16807) % 2147483647; return (seed - 1) / 2147483646; };
const CX = 440, CY = 530, AX = 170, AY = 138;
const superPt = (a: number, k: number): [number, number] => {
  const c = Math.cos(a), s = Math.sin(a), e = 0.82;
  return [CX + Math.sign(c) * Math.pow(Math.abs(c), e) * AX * k, CY + Math.sign(s) * Math.pow(Math.abs(s), e) * AY * k];
};
const fmt = (p: [number, number]) => `${p[0].toFixed(1)} ${p[1].toFixed(1)}`;

function useMapData() {
  return useMemo(() => {
    const r = rng(4242);
    const brown: [number, number][] = [...outliers];
    for (let i = 0; i < 300; i++) {
      const a = r() * Math.PI * 2, k = 1.0 + r() * r() * 0.55;
      brown.push(superPt(a, k));
    }
    for (let i = 0; i < 60; i++) brown.push([190 + r() * 70, 575 + r() * 70]);
    for (let i = 0; i < 40; i++) brown.push([615 + r() * 90, 500 + r() * 90]);
    for (let i = 0; i < 55; i++) brown.push([270 + r() * 370, 660 + r() * 50]);
    for (let i = 0; i < 30; i++) brown.push([230 + r() * 220, 365 + r() * 45]);
    const red: [number, number][] = [];
    for (let i = 0; i < 340; i++) {
      const a = r() * Math.PI * 2, k = Math.sqrt(r());
      red.push([468 + Math.cos(a) * 92 * k, 515 + Math.sin(a) * 108 * k]);
    }
    for (let i = 0; i < 520; i++) {
      const a = r() * Math.PI * 2, k = 0.25 + Math.sqrt(r()) * 0.75;
      red.push(superPt(a, k));
    }
    const nets: string[] = [];
    for (let i = 0; i < 420; i++) {
      const a = r() * Math.PI * 2, k = 0.3 + r() * 0.76, da = 0.08 + r() * 0.3;
      nets.push(`M${fmt(superPt(a, k))}L${fmt(superPt(a + da / 2, k))}L${fmt(superPt(a + da, k))}`);
    }
    for (let i = 0; i < 240; i++) {
      const a = r() * Math.PI * 2, k1 = 0.35 + r() * 0.6, k2 = Math.min(1.04, k1 + 0.08 + r() * 0.22);
      nets.push(`M${fmt(superPt(a, k1))}L${fmt(superPt(a + (r() - 0.5) * 0.12, k2))}`);
    }
    let ring = "";
    for (let t = 0; t <= 60; t++) ring += `${t ? "L" : "M"}${fmt(superPt((t / 60) * Math.PI * 2, 1.05))}`;
    return { brown, red, nets, ring };
  }, []);
}

const MapDrawing = () => {
  const { brown, red, nets, ring } = useMapData();
  return (
    <MapSvg viewBox="76 110 912 832">
      <g fill="none" stroke="#e3a9bd" strokeWidth="2.200">
        <path d="M190 405l25 10 30 15 40-8M205 440l40-10 30-30" />
        <path d="M590 395l40 5 40-10 60-5 5 35M620 485l60-25 55-15M700 640l45-10M610 650l60 15 40 5" />
      </g>
      <g fill="none" stroke="#7fa982" strokeWidth="2.600">
        <path d="M85 130l15 36-8 34-16 15" />
        <path d="M76 390c40-20 70-30 100-60s60-70 110-92c40-18 90-18 130-2 30 6 50 22 52 50 2 30-30 70-70 100-40 20-90 40-120 70-30 30-60 70-85 110-15 30-10 60 10 85 20 15 50 15 70 5" />
        <path d="M76 398c40-18 75-32 105-62s60-70 110-92c40-15 85-15 125 0 25 8 38 22 38 45 0 25-20 50-60 78" />
        <path d="M597 680c5 30 0 50 0 60 30 20 30 40 20 70-10 20-20 30-15 50 20 20 50 40 70 82" />
      </g>
      {brown.map(([x, y], i) => <circle key={i} cx={x} cy={y} r={8.200} fill="#a06f58" stroke="#5e4a40" strokeWidth="1.400" />)}
      <path d={`${ring}z`} fill="#f2f2f2" stroke="#666" strokeWidth="2.400" />
      <path d="M265 462h55l-25 45h-25z" fill="#b4b4b4" stroke="#666" strokeWidth="2" />
      <path d="M193 535l15-42 30-22 42 30-6 42-12 30-24 0z" fill="#fff" stroke="#333" strokeWidth="2" />
      <path d="M208 505l30 12 35 8M285 600l20 15-15 15-5-15z" fill="#fff" stroke="#333" strokeWidth="1.600" />
      <path d="M580 620l30-30 15 5 55-18 40 8 8 22-12 20 0 30-15 8-45 0-30-15-30-15z" fill="#fcfcfc" stroke="#333" strokeWidth="2" />
      <path d="M610 640l25-25 30-5 25 10 25 5" fill="none" stroke="#333" strokeWidth="1.500" />
      <circle cx="662" cy="637" r="4" fill="#c8391c" />
      <circle cx="232" cy="540" r="2.500" fill="#a0522d" />
      <path d={nets.join("")} fill="none" stroke="#333" strokeWidth="2" />
      <g fill="#b4b4b4" stroke="#777" strokeWidth="1.500">
        <circle cx="565" cy="523" r="12" /><circle cx="500" cy="597" r="12" /><circle cx="480" cy="405" r="9" />
      </g>
      {red.map(([x, y], i) => <circle key={i} cx={x} cy={y} r={7.200} fill="#c83c1c" stroke="#6e2a1a" strokeWidth="1.100" />)}
      <path d={nets.filter((_, i) => i % 3 === 0).join("")} fill="none" stroke="#333" strokeWidth="1.800" />
      <g fill="#e3a0bb"><circle cx="488" cy="374" r="6" /><circle cx="618" cy="494" r="6" /><circle cx="312" cy="630" r="7" /><circle cx="248" cy="430" r="6" /><circle cx="630" cy="566" r="5" /><circle cx="225" cy="418" r="7" /></g>
      <circle cx="287" cy="477" r="6" fill="#c83c1c" stroke="#6e2a1a" />
    </MapSvg>
  );
};

/* ---------- rulers ---------- */
const tickRange = (from: number, to: number) => { const a: number[] = []; for (let v = from; v <= to; v += 5) a.push(v); return a; };

const HRuler = () => {
  const ox = 209.700;
  return (
    <RulerH viewBox="0 0 1164 23">
      {tickRange(-80, 375).map((v) => {
        const x = ox + v * 2.5, major = v % 20 === 0, mid = v % 10 === 0;
        return <line key={v} x1={x} x2={x} y1={major ? 0 : mid ? 15 : 19} y2="23" stroke="#777" strokeWidth="1" />;
      })}
      {tickRange(-80, 360).filter((v) => v % 20 === 0).map((v) => (
        <text key={v} x={ox + v * 2.5 + 2} y="15" fontFamily="Noto Sans" fontSize="12" fill="#444">{v}</text>
      ))}
      <line x1="620.500" x2="620.500" y1="0" y2="23" stroke="#e08a70" />
    </RulerH>
  );
};

const VRuler = () => {
  const oy = 171.500;
  return (
    <RulerV viewBox="0 0 23 872">
      {tickRange(-65, 285).map((v) => {
        const y = oy + v * 2.5, major = v % 20 === 0, mid = v % 10 === 0;
        return <line key={v} y1={y} y2={y} x1={major ? 0 : mid ? 15 : 18} x2="23" stroke="#777" strokeWidth="1" />;
      })}
      {tickRange(-60, 280).filter((v) => v % 20 === 0).map((v) => (
        <text key={v} transform={`translate(14 ${oy + v * 2.5 + 3}) rotate(-90)`} textAnchor="end" fontFamily="Noto Sans" fontSize="12" fill="#444">{v}</text>
      ))}
      <line y1="184" y2="184" x1="0" x2="23" stroke="#eeb8a8" />
    </RulerV>
  );
};

const ArrowLeft = ({ x, y, w }: { x: number; y: number; w: number }) => (
  <ArrowBox $x={x} $y={y} $w={w} viewBox={`0 0 ${w} 14`}>
    <path d={`M0 7L12 0V5H${w}V9H12V14z`} fill="#c5323a" />
  </ArrowBox>
);
const ArrowRight = ({ x, y, w }: { x: number; y: number; w: number }) => (
  <ArrowBox $x={x} $y={y} $w={w} viewBox={`0 0 ${w} 14`}>
    <path d={`M${w} 7L${w - 11} 0V5H0V9H${w - 11}V14z`} fill="#c5323a" />
  </ArrowBox>
);

const Lines = ({ t }: { t: string[] }) => <>{t.map((l, i) => <AnnotLine key={i}>{l}</AnnotLine>)}</>;

const left = ["hand","zoomTool","select","moveC","editN","add3d","addMap","addPic","addLbl","addLeg","addScale","addN","addShape","addStar","addArrow","addNodes","addHtml","addTable","addFixed"];

export default function App() {
  return (
    <>
      <GlobalStyle />
      <Page>
        <TitleBar>
          <Logo />
          <TitleText>*accessibilite_methode1</TitleText>
          <WinButtons>
            <IconSvg width="24" height="12" viewBox="0 0 24 12"><path d="M7 6h10" stroke="#222" /></IconSvg>
            <IconSvg width="24" height="12" viewBox="0 0 24 12"><path d="M7.500 3.500h7v7h-7zM9.500 3.500v-2h7v7h-2" fill="none" stroke="#222" /></IconSvg>
            <IconSvg width="24" height="12" viewBox="0 0 24 12"><path d="M7 1l10 10M17 1L7 11" stroke="#222" /></IconSvg>
          </WinButtons>
        </TitleBar>
        <Win>
          <MenuBar>
            <MenuPad />
            <MenuItem $w={90}><u>M</u>ise en page</MenuItem>
            <MenuItem $w={44}><u>É</u>diter</MenuItem>
            <MenuItem $w={33}>V<u>u</u>e</MenuItem>
            <MenuItem $w={65}><u>É</u>léments</MenuItem>
            <MenuItem $w={107}><u>A</u>jouter un objet</MenuItem>
            <MenuItem $w={38}>A<u>t</u>las</MenuItem>
            <MenuItem $w={80}><u>P</u>aramètres</MenuItem>
          </MenuBar>
          <Toolbar $h={34} $pad={13}>
            <ToolBtn><Icon n="save" /></ToolBtn>
            <ToolGap $w={8} />
            {["newL","dupL","mgr","folder","saveT"].map((n) => <ToolBtn key={n}><Icon n={n} /></ToolBtn>)}
            <ToolGap $w={13} />
            <ToolBtn><Icon n="newP" /></ToolBtn>
            <ToolGap $w={1} />
            {["print","expImg","expSvg","expPdf","undo","redo"].map((n) => <ToolBtn key={n}><Icon n={n} /></ToolBtn>)}
            <ToolGap $w={18} />
            {["atlas","first","prev"].map((n) => <ToolBtn key={n}><Icon n={n} /></ToolBtn>)}
            <PageCombo>1<Caret $c="#999" /></PageCombo>
            {["next","last","printD","expD"].map((n) => <ToolBtn key={n}><Icon n={n} /></ToolBtn>)}
            <ToolBtn $w={12}><Caret $c="#999" /></ToolBtn>
            <ToolBtn><Icon n="settings" /></ToolBtn>
          </Toolbar>
          <Toolbar $h={33} $pad={14}>
            {["zIn","zOut","z11","zFull","refresh"].map((n) => <ToolBtn key={n}><Icon n={n} /></ToolBtn>)}
            <ToolGap $w={21} />
            {["lock","unlock","group","ungroup","raise","lower","align","distrib"].map((n) => <ToolBtn key={n} $w={25}><Icon n={n} /></ToolBtn>)}
          </Toolbar>
          <Main>
            <LeftBar>
              {left.map((n) => <LeftBtn key={n} $on={n === "select"}><Icon n={n} s={23} /></LeftBtn>)}
            </LeftBar>
            <Center>
              <Corner />
              <HRuler />
              <VRuler />
              <Canvas>
                <Paper>
                  <MapFrame>
                    <MapDrawing />
                    {[[0,0],[50,0],[100,0],[0,50],[100,50],[0,100],[50,100],[100,100]].map(([x, y]) => <Handle key={`${x}-${y}`} $x={x} $y={y} />)}
                  </MapFrame>
                </Paper>
              </Canvas>
            </Center>
            <Right>
              <Tabs $mt={2}>
                <Tab $w={74} $on>Éléments</Tab>
                <Tab $w={79}>Historique</Tab>
              </Tabs>
              <DockHead>Éléments<DockBtns><DockBtn /><DockBtn /></DockBtns></DockHead>
              <Tree>
                <TreeHead>
                  <TreeIconCell $w={36} $pad={2}><Icon n="eyeG" s={18} /></TreeIconCell>
                  <TreeIconCell $w={39} $pad={4}><Icon n="padlock" s={18} /></TreeIconCell>
                  <TreeTextCell>Objet</TreeTextCell>
                </TreeHead>
                <TreeRow>
                  <TreeCheck $w={37} $pad={0}><CheckBox $s={16}><IconSvg width="12" height="12" viewBox="0 0 12 12"><path d="M1.500 6.500l3 4 6-9" fill="none" stroke="#111" strokeWidth="2" /></IconSvg></CheckBox></TreeCheck>
                  <TreeCheck $w={42} $pad={2}><CheckBox $s={16} /></TreeCheck>
                  <Icon n="map1" s={16} />
                  <TreeName>Carte 1</TreeName>
                </TreeRow>
              </Tree>
              <Spacer6 />
              <Spacer6 />
              <Tabs>
                <Tab $w={97}>Mise en page</Tab>
                <Tab $w={132} $on>Propriétés de l'objet</Tab>
                <Tab $w={63}>Guides</Tab>
              </Tabs>
              <DockHead>Propriétés de l'objet<DockBtns><DockBtn /><DockBtn /></DockBtns></DockHead>
              <Title1>Carte 1</Title1>
              <IconRow>
                <SmallBtn><Icon n="refresh" s={17} /></SmallBtn>
                <SmallSep $w={6} />
                <SmallBtn><Icon n="p1" s={17} /></SmallBtn>
                <SmallBtn><Icon n="p2" s={17} /></SmallBtn>
                <SmallSep $w={6} />
                <SmallBtn><Icon n="p3" s={17} /></SmallBtn>
                <SmallBtn><Icon n="p4" s={17} /></SmallBtn>
                <SmallSep $w={6} />
                <SmallBtn><Icon n="p5" s={17} /></SmallBtn>
                <SmallBtn><Icon n="p6" s={17} /></SmallBtn>
                <SmallSep $w={6} />
                <SmallBtn><Icon n="p7" s={15} /></SmallBtn>
                <SmallBtn><Icon n="p8" s={16} /></SmallBtn>
              </IconRow>
              <Scroll>
                <Form>
                  <HeadSection $h={21}><Tri $open />Propriétés principales</HeadSection>
                  <Group $pt={9} $pb={6} $gap={0}>
                    <Row><Label $w={106}>Échelle</Label><Field>252840</Field><DataBtn /></Row>
                    <Row $h={21} $mt={9}><Label $w={106}>Rotation de la carte</Label><Field>0,00 °<SpinBox><CaretUp /><Caret /></SpinBox></Field><DataBtn /></Row>
                    <Row $h={25} $mt={5}><Label $w={106}>SCR</Label><Combo>Utiliser le SCR du projet<Caret /></Combo><SquareBtn><Icon n="globe" s={18} /></SquareBtn><DataBtn /></Row>
                    <Row $h={15} $mt={4}><CheckBox $s={15}><IconSvg width="13" height="13" viewBox="0 0 12 12"><path d="M1.500 6.500l3 4 6-9" fill="none" stroke="#111" strokeWidth="1.800" /></IconSvg></CheckBox><CheckLabel>Dessiner les objets du canevas de carte</CheckLabel></Row>
                  </Group>
                  <HeadSection $h={21}><Tri $open />Couches</HeadSection>
                  <Group $pt={8} $pb={3} $gap={0}>
                    <Row><CheckBox $s={16} /><CheckLabel>Suivre le thème de la carte</CheckLabel><PushRight /><WhiteCombo $w={207}>(aucun)<Caret /></WhiteCombo><DataBtn /></Row>
                    <Row $mt={9}><CheckBox $s={16} /><CheckLabel>Verrouiller les couches</CheckLabel><PushRight /><SquareBtn><Icon n="eye" s={18} /></SquareBtn><DataBtn /></Row>
                    <Row $mt={6}><CheckBox $s={16} $dim /><CheckLabel $dim>Verrouiller le style des couches</CheckLabel></Row>
                  </Group>
                  <HeadSection $h={20}><Tri $open />Emprise</HeadSection>
                  <Group $pt={9} $pb={10} $gap={9.500}>
                    <Row><Label $w={36}>min X</Label><Field>639191,680</Field><DataBtn /></Row>
                    <Row><Label $w={36}>min Y</Label><Field>6848354,668</Field><DataBtn /></Row>
                    <Row><Label $w={36}>max X</Label><Field>669785,299</Field><DataBtn /></Row>
                    <Row><Label $w={36}>max Y</Label><Field>6876473,802</Field><DataBtn /></Row>
                  </Group>
                  <Section $h={18} $mt={2}><Tri /><SectionCheck><CheckBox $s={16} /></SectionCheck>Plage temporelle</Section>
                  <Section $h={18} $dim><Tri $dim /><SectionCheck><CheckBox $s={16} $dim /></SectionCheck>Contrôlé par Atlas</Section>
                  <Section $h={18}><Tri />Grilles</Section>
                  <Section $h={17}><Tri />Aperçus</Section>
                  <Section $h={18}><Tri />Position et taille</Section>
                  <Section $h={18} $mt={6}><Tri />Rotation</Section>
                  <Section $h={18} $mt={6}><Tri /><SectionCheck><CheckBox $s={16} /></SectionCheck>Cadre</Section>
                </Form>
                <VScroll>
                  <VThumb><CaretUp /></VThumb>
                  <VTrack><Caret /></VTrack>
                </VScroll>
              </Scroll>
            </Right>
          </Main>
          <Status>
            <StatusText>x: 164.062 mm y: 4.98235 mm page: 1</StatusText>
            <ZoomCombo>59.5%<Caret /></ZoomCombo>
            <Slider><SliderKnob /></Slider>
          </Status>
        </Win>

        <RedRect />
        <RedPanel />
        <Annot $x={338} $y={6} $lh={24.500}><Lines t={["Exporter la carte (en image, pdf ou svg pour la", "modifier dans un logiciel de dessin)"]} /></Annot>
        <Annot $x={68} $y={151} $lh={24.900}><Lines t={["outil pour tracer un cadre de carte. Va", "reproduire ce que vous voyez dans la", "fenêtre de visualisation de l’interface", "principales de QGIS (échelle, couches", "affichées, symbologie, ordre des", "couches)."]} /></Annot>
        <Annot $x={599} $y={161} $size={23.700} $lh={30}>Fenêtre de visualisation du document final</Annot>
        <Annot $x={70} $y={328}>Pour ajouter du texte (titre, sources, etc.)</Annot>
        <Annot $x={70} $y={351}>Pour ajouter une légende</Annot>
        <Annot $x={70} $y={383}>Pour ajouter une échelle</Annot>
        <Annot $x={599} $y={315} $lh={25}><Lines t={["Sur la carte s’affiche les couches et la symbo-", "logie qui s’affichent dans la fenêtre de", "visualisation principales Pour afficher les", "distances aux différentes stations de trans-", "port, on va tour à tour aller cocher et déco-", "cher les couches à visualiser dans la fenêtre", "de visualisation principale, avant de revenir", "dans la mise en page créer une nouvelle carte", "montrant la nouvelle couchecochée. Atten-", "tion, pour que cela fonctionne il faut que les", "cartes d’avant soient paramétrées en mode", "«vérrouiller les couches» pour qu’elles ne", "soient pas modifiées à chaque fois"]} /></Annot>
        <Annot $x={1137} $y={680} $right><Lines t={["Cocher «verrouiller les couches»", "pour que la carte reste la même,", "même quand vous changerez la", "visibilité des couches dans la", "fenêtre principale"]} /></Annot>
        <Annot $x={1236} $y={358}>Propriété de l’objet sélectionné, ici la carte.</Annot>
        <ArrowLeft x={33} y={287} w={30} />
        <ArrowLeft x={34} y={337} w={31} />
        <ArrowLeft x={34} y={360} w={31} />
        <ArrowLeft x={34} y={392} w={31} />
        <ArrowRight x={1151} y={688} w={77} />
      </Page>
    </>
  );
}
